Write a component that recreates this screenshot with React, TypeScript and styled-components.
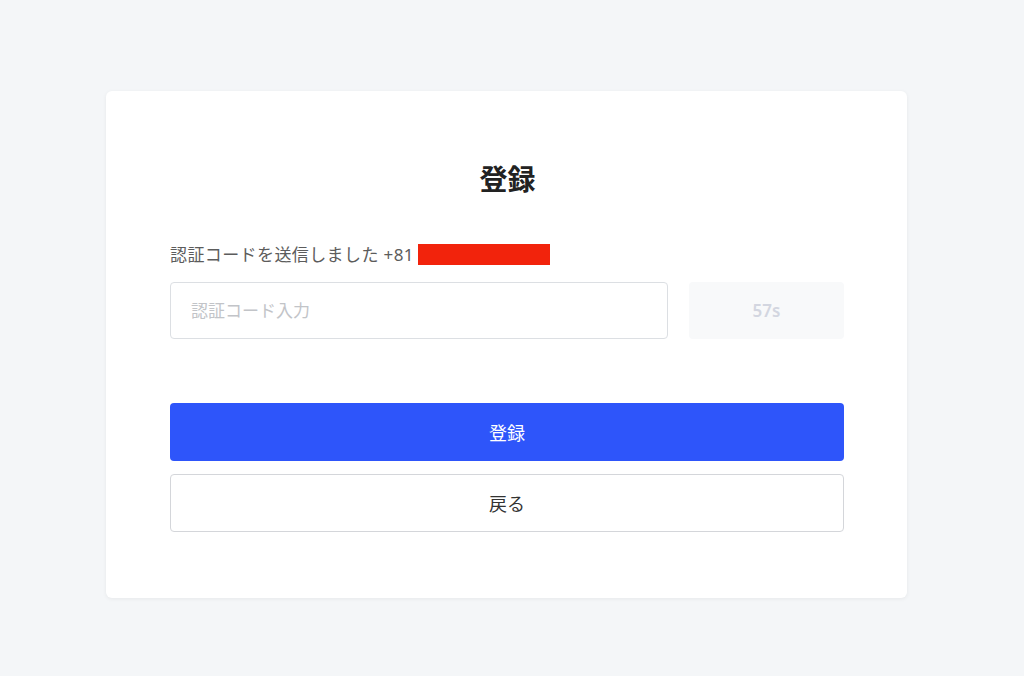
import React from 'react';
import styled, { createGlobalStyle } from 'styled-components';

const GlobalStyle = createGlobalStyle`
  html, body {
    margin: 0;
    padding: 0;
    background: #f4f6f8;
    font-family: "Noto Sans", "Noto Sans CJK JP", sans-serif;
  }
`;

const Page = styled.div`
  width: 1024px;
  height: 676px;
  padding-top: 91px;
  box-sizing: border-box;
`;

const Card = styled.div`
  margin-left: 106px;
  width: 801px;
  height: 507px;
  box-sizing: border-box;
  background: #fff;
  border-radius: 6px;
  box-shadow: 0 1px 4px rgba(0, 0, 0, 0.06);
  padding: 68px 63px 0 64px;
  display: flex;
  flex-direction: column;
`;

const Title = styled.h1`
  margin: 0;
  text-align: center;
  font-size: 28px;
  line-height: 40px;
  font-weight: 700;
  color: #222;
  padding-left: 1px;
`;

const Notice = styled.p`
  margin: 45px 0 0;
  font-size: 17px;
  letter-spacing: 0.4px;
  line-height: 21px;
  color: #5c5c5c;
  display: flex;
  align-items: center;
`;

const Masked = styled.span`
  display: inline-block;
  width: 132px;
  height: 21px;
  margin-left: 4px;
  background: #f2230c;
`;

const CodeRow = styled.div`
  margin-top: 17px;
  display: flex;
  gap: 21px;
`;

const CodeInput = styled.input`
  flex: 1;
  height: 57px;
  box-sizing: border-box;
  border: 1px solid #dcdfe3;
  border-radius: 4px;
  padding: 0 20px;
  font-family: inherit;
  font-size: 17px;
  color: #333;
  outline: none;
  &::placeholder {
    color: #c2c4c8;
  }
`;

const TimerButton = styled.button`
  width: 155px;
  height: 57px;
  border: none;
  border-radius: 4px;
  background: #f8f9fa;
  color: #d3d6e0;
  font-family: inherit;
  font-size: 17px;
  font-weight: 600;
`;

const Button = styled.button<{ $primary?: boolean }>`
  width: 100%;
  height: 58px;
  box-sizing: border-box;
  border-radius: 4px;
  font-family: inherit;
  font-size: 18px;
  cursor: pointer;
  border: ${(p) => (p.$primary ? 'none' : '1px solid #d4d6da')};
  background: ${(p) => (p.$primary ? '#2e55fa' : '#fff')};
  color: ${(p) => (p.$primary ? '#fff' : '#333')};
`;

const Actions = styled.div`
  margin-top: 64px;
  display: flex;
  flex-direction: column;
  gap: 13px;
`;

export default function App() {
  return (
    <Page>
      <GlobalStyle />
      <Card>
        <Title>登録</Title>
        <Notice>
          認証コードを送信しました +81
          <Masked />
        </Notice>
        <CodeRow>
          <CodeInput placeholder="認証コード入力" />
          <TimerButton disabled>57s</TimerButton>
        </CodeRow>
        <Actions>
          <Button $primary>登録</Button>
          <Button>戻る</Button>
        </Actions>
      </Card>
    </Page>
  );
}
